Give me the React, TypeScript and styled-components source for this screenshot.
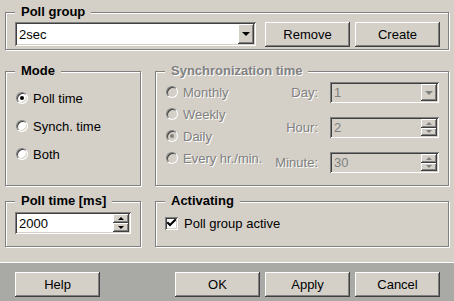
import styled, { createGlobalStyle } from 'styled-components';

const GlobalStyle = createGlobalStyle`
  html, body {
    margin: 0;
    padding: 0;
    background: #d4d0c8;
  }

  body {
    font-family: 'Liberation Sans', Arial, sans-serif;
    font-size: 13px;
    color: #000;
  }
`;

const ArrowDown = ({ disabled }: { disabled?: boolean }) => (
  <Triangle $size={4} $disabled={disabled} />
);

export default function App() {
  return (
    <>
      <GlobalStyle />
      <Dialog>
        <Main>
          <Group $height={38}>
            <Caption>Poll group</Caption>
            <PollGroupRow>
              <Field $width={241} $height={24}>
                <FieldValue>2sec</FieldValue>
                <ComboButton>
                  <ArrowDown />
                </ComboButton>
              </Field>
              <Button $gap={9}>Remove</Button>
              <Button $gap={5}>Create</Button>
            </PollGroupRow>
          </Group>

          <Columns $top={21}>
            <Group $height={115}>
              <Caption>Mode</Caption>
              <RadioList $top={18} $gap={12}>
                <RadioRow>
                  <Radio $checked />
                  Poll time
                </RadioRow>
                <RadioRow>
                  <Radio />
                  Synch. time
                </RadioRow>
                <RadioRow>
                  <Radio />
                  Both
                </RadioRow>
              </RadioList>
            </Group>

            <Group $height={115}>
              <Caption $disabled>Synchronization time</Caption>
              <SyncBody>
                <RadioList $top={12} $gap={6}>
                  <RadioRow $disabled>
                    <Radio $disabled />
                    Monthly
                  </RadioRow>
                  <RadioRow $disabled>
                    <Radio $disabled />
                    Weekly
                  </RadioRow>
                  <RadioRow $disabled>
                    <Radio $disabled $checked />
                    Daily
                  </RadioRow>
                  <RadioRow $disabled>
                    <Radio $disabled />
                    Every hr./min.
                  </RadioRow>
                </RadioList>

                <FieldGrid>
                  <FieldLabel>Day:</FieldLabel>
                  <Field $width={109} $height={21} $disabled>
                    <FieldValue>1</FieldValue>
                    <ComboButton>
                      <ArrowDown disabled />
                    </ComboButton>
                  </Field>

                  <FieldLabel>Hour:</FieldLabel>
                  <Field $width={109} $height={21} $disabled>
                    <FieldValue>2</FieldValue>
                    <SpinButtons>
                      <SpinButton>
                        <Triangle $size={3} $up $disabled />
                      </SpinButton>
                      <SpinButton>
                        <Triangle $size={3} $disabled />
                      </SpinButton>
                    </SpinButtons>
                  </Field>

                  <FieldLabel>Minute:</FieldLabel>
                  <Field $width={109} $height={21} $disabled>
                    <FieldValue>30</FieldValue>
                    <SpinButtons>
                      <SpinButton>
                        <Triangle $size={3} $up $disabled />
                      </SpinButton>
                      <SpinButton>
                        <Triangle $size={3} $disabled />
                      </SpinButton>
                    </SpinButtons>
                  </Field>
                </FieldGrid>
              </SyncBody>
            </Group>
          </Columns>

          <Columns $top={15}>
            <Group $height={46}>
              <Caption>Poll time [ms]</Caption>
              <PollTimeBody>
                <Field $width={116} $height={22}>
                  <FieldValue>2000</FieldValue>
                  <SpinButtons>
                    <SpinButton>
                      <Triangle $size={3} $up />
                    </SpinButton>
                    <SpinButton>
                      <Triangle $size={3} />
                    </SpinButton>
                  </SpinButtons>
                </Field>
              </PollTimeBody>
            </Group>

            <Group $height={46}>
              <Caption>Activating</Caption>
              <CheckRow>
                <CheckBox>
                  <svg width='9' height='9' viewBox='0 0 9 9'>
                    <polyline
                      points='1,4 3,6 8,1'
                      fill='none'
                      stroke='#000'
                      strokeWidth='2'
                      strokeLinecap='square'
                    />
                  </svg>
                </CheckBox>
                Poll group active
              </CheckRow>
            </Group>
          </Columns>
        </Main>

        <ButtonBar>
          <Button>Help</Button>
          <ButtonGroup>
            <Button>OK</Button>
            <Button $gap={5}>Apply</Button>
            <Button $gap={5}>Cancel</Button>
          </ButtonGroup>
        </ButtonBar>
      </Dialog>
    </>
  );
}

const Dialog = styled.div`
  width: 454px;
  height: 301px;
  display: flex;
  flex-direction: column;
  background: #d4d0c8;
  overflow: hidden;
`;

const Main = styled.div`
  display: flex;
  flex-direction: column;
  padding: 12px 5px 0 5px;
`;

const Columns = styled.div<{ $top: number }>`
  display: grid;
  grid-template-columns: 136px 294px;
  column-gap: 14px;
  margin-top: ${(p) => p.$top}px;
`;

const Group = styled.div<{ $height: number }>`
  position: relative;
  box-sizing: border-box;
  height: ${(p) => p.$height}px;
  border: 1px solid #808080;
  box-shadow: inset 1px 1px #fff, 1px 1px #fff;
`;

const Caption = styled.span<{ $disabled?: boolean }>`
  position: absolute;
  left: 9px;
  top: -9px;
  padding: 0 6px;
  background: #d4d0c8;
  font-weight: bold;
  line-height: 15px;
  color: ${(p) => (p.$disabled ? '#808080' : '#000')};
  text-shadow: ${(p) => (p.$disabled ? '1px 1px 0 #fff' : 'none')};
`;

const PollGroupRow = styled.div`
  display: flex;
  align-items: flex-start;
  padding: 9px 8px 0 9px;
`;

const Field = styled.div<{ $width: number; $height: number; $disabled?: boolean }>`
  box-sizing: border-box;
  display: flex;
  width: ${(p) => p.$width}px;
  height: ${(p) => p.$height}px;
  padding: 2px;
  background: ${(p) => (p.$disabled ? '#d4d0c8' : '#fff')};
  color: ${(p) => (p.$disabled ? '#808080' : '#000')};
  box-shadow: inset 1px 1px #808080, inset -1px -1px #fff,
    inset 2px 2px #404040, inset -2px -2px #d4d0c8;
`;

const FieldValue = styled.span`
  flex: 1;
  display: flex;
  align-items: center;
  padding-left: 2px;
  line-height: 15px;
`;

const Raised = styled.div`
  box-sizing: border-box;
  display: flex;
  align-items: center;
  justify-content: center;
  background: #d4d0c8;
  box-shadow: inset -1px -1px #404040, inset 1px 1px #fff,
    inset -2px -2px #808080, inset 2px 2px #d4d0c8;
`;

const ComboButton = styled(Raised)`
  width: 16px;
`;

const SpinButtons = styled.div`
  display: flex;
  flex-direction: column;
  width: 16px;
`;

const SpinButton = styled(Raised)`
  flex: 1;
`;

const Triangle = styled.span<{ $size: number; $up?: boolean; $disabled?: boolean }>`
  width: 0;
  height: 0;
  border-left: ${(p) => p.$size}px solid transparent;
  border-right: ${(p) => p.$size}px solid transparent;
  ${(p) => (p.$up ? 'border-bottom' : 'border-top')}: ${(p) => p.$size}px solid
    ${(p) => (p.$disabled ? '#808080' : '#000')};
`;

const Button = styled(Raised)<{ $gap?: number }>`
  width: 85px;
  height: 25px;
  margin-left: ${(p) => p.$gap ?? 0}px;
  font-size: 13px;
  cursor: default;
`;

const RadioList = styled.div<{ $top: number; $gap: number }>`
  display: flex;
  flex-direction: column;
  gap: ${(p) => p.$gap}px;
  padding: ${(p) => p.$top}px 0 0 10px;
`;

const RadioRow = styled.label<{ $disabled?: boolean }>`
  display: flex;
  align-items: center;
  gap: 5px;
  height: 16px;
  white-space: nowrap;
  color: ${(p) => (p.$disabled ? '#808080' : '#000')};
  text-shadow: ${(p) => (p.$disabled ? '1px 1px 0 #fff' : 'none')};
`;

const Radio = styled.span<{ $checked?: boolean; $disabled?: boolean }>`
  position: relative;
  flex: none;
  box-sizing: border-box;
  width: 12px;
  height: 12px;
  border-radius: 50%;
  border: 1px solid;
  border-color: #808080 #fff #fff #808080;
  background: ${(p) => (p.$disabled ? '#d4d0c8' : '#fff')};
  box-shadow: inset 1px 1px #404040, inset -1px -1px #d4d0c8;

  &::after {
    content: '';
    display: ${(p) => (p.$checked ? 'block' : 'none')};
    position: absolute;
    left: 3px;
    top: 3px;
    width: 4px;
    height: 4px;
    border-radius: 50%;
    background: ${(p) => (p.$disabled ? '#808080' : '#000')};
  }
`;

const SyncBody = styled.div`
  display: flex;
  justify-content: space-between;
`;

const FieldGrid = styled.div`
  display: grid;
  grid-template-columns: auto 109px;
  column-gap: 12px;
  row-gap: 14px;
  align-items: center;
  padding: 10px 9px 0 0;
`;

const FieldLabel = styled.span`
  text-align: right;
  color: #808080;
  text-shadow: 1px 1px 0 #fff;
`;

const PollTimeBody = styled.div`
  padding: 10px 0 0 9px;
`;

const CheckRow = styled.label`
  display: flex;
  align-items: center;
  gap: 6px;
  padding: 14px 0 0 9px;
`;

const CheckBox = styled.span`
  box-sizing: border-box;
  display: flex;
  align-items: center;
  justify-content: center;
  width: 13px;
  height: 13px;
  background: #fff;
  box-shadow: inset 1px 1px #808080, inset -1px -1px #fff,
    inset 2px 2px #404040, inset -2px -2px #d4d0c8;
`;

const ButtonBar = styled.div`
  display: flex;
  align-items: flex-start;
  margin-top: auto;
  height: 39px;
  box-sizing: border-box;
  padding: 9px 14px 0 15px;
  border-top: 1px solid #fff;
  background: #a9aaa5;
`;

const ButtonGroup = styled.div`
  display: flex;
  margin-left: auto;
`;
